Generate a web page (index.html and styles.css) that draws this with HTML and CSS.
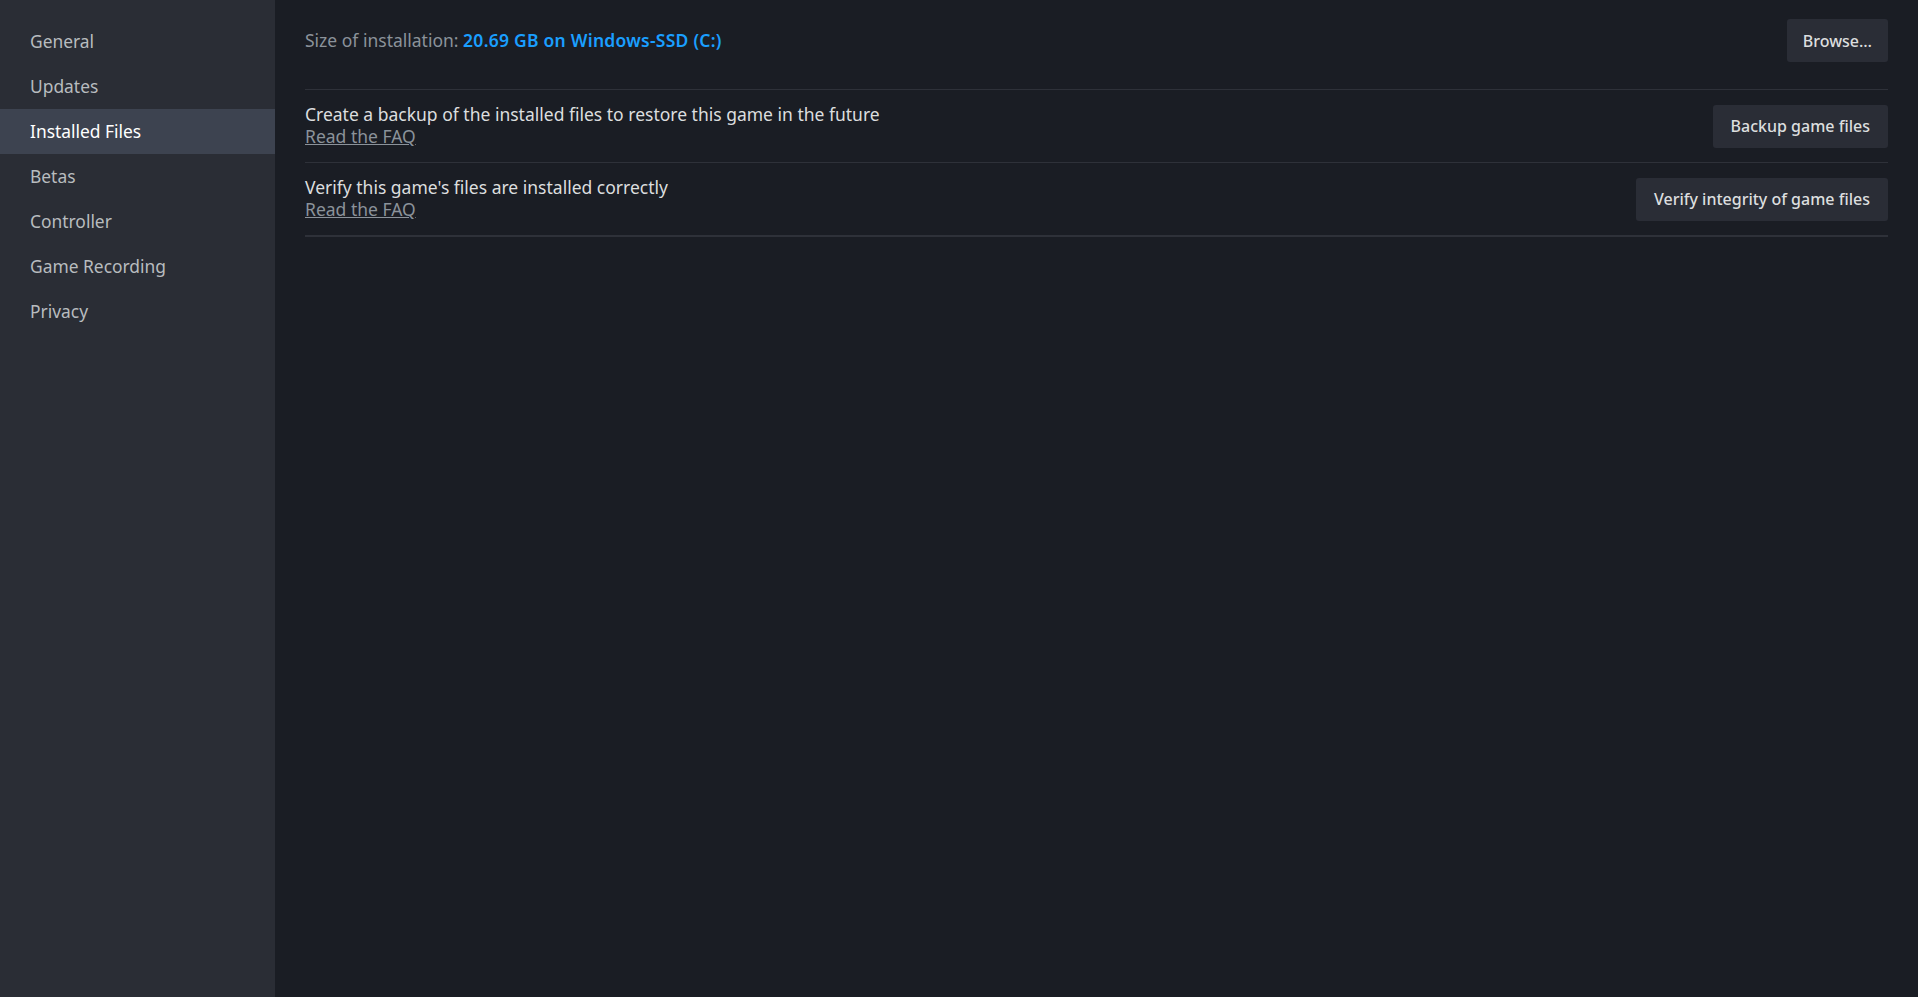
FILE: index.html
```html
<!DOCTYPE html>
<html lang="en">
<head>
<meta charset="utf-8">
<title>Properties - Installed Files</title>
<link rel="stylesheet" href="styles.css">
</head>
<body>
<div class="app">
  <nav class="sidebar">
    <div class="nav-item">General</div>
    <div class="nav-item">Updates</div>
    <div class="nav-item active">Installed Files</div>
    <div class="nav-item">Betas</div>
    <div class="nav-item">Controller</div>
    <div class="nav-item">Game Recording</div>
    <div class="nav-item">Privacy</div>
  </nav>
  <main class="content">
    <div class="row row-size">
      <div class="size">Size of installation: <span class="size-value">20.69 GB on Windows-SSD (C:)</span></div>
      <button class="btn btn-browse">Browse…</button>
    </div>
    <div class="row">
      <div class="desc">
        <div class="desc-title">Create a backup of the installed files to restore this game in the future</div>
        <a class="faq" href="#">Read the FAQ</a>
      </div>
      <button class="btn">Backup game files</button>
    </div>
    <div class="row row-last">
      <div class="desc">
        <div class="desc-title">Verify this game's files are installed correctly</div>
        <a class="faq" href="#">Read the FAQ</a>
      </div>
      <button class="btn">Verify integrity of game files</button>
    </div>
  </main>
</div>
</body>
</html>
```
FILE: styles.css
```css
html, body {
  margin: 0;
  padding: 0;
  height: 100%;
  background: #1a1d24;
}
body {
  font-family: "Noto Sans", "Open Sans", sans-serif;
  font-size: 17.5px;
  color: #dcdedf;
}
.app {
  display: flex;
  height: 100vh;
}
.sidebar {
  width: 275px;
  flex: 0 0 275px;
  background: #2a2d35;
  padding-top: 19px;
  box-sizing: border-box;
}
.nav-item {
  height: 45px;
  line-height: 45px;
  padding-left: 30px;
  color: #b8bcbf;
  font-size: 17.4px;
}
.nav-item.active {
  background: #3d4350;
  color: #ffffff;
}
.content {
  flex: 1;
  padding: 19px 30px 0 30px;
  display: flex;
  flex-direction: column;
}
.row {
  display: flex;
  align-items: center;
  justify-content: space-between;
  border-bottom: 1px solid #2e3139;
  padding: 13px 0 15px 0;
}
.row .btn {
  position: relative;
  top: 1px;
}
.desc {
  display: flex;
  flex-direction: column;
  line-height: 22px;
}
.row-size {
  padding: 0 0 27px 0;
}
.row-size .btn {
  top: 0;
}
.row-size .size {
  padding-bottom: 2px;
}
.row-last {
  border-bottom: 2px solid #2e3139;
}
.size {
  color: #8b929a;
}
.size-value {
  color: #1a9fff;
  font-weight: 600;
  letter-spacing: 0.25px;
}
.desc-title {
  color: #dcdedf;
}
.faq {
  color: #8b929a;
  text-decoration: underline;
  align-self: flex-start;
}
.btn {
  font-family: inherit;
  font-size: 16px;
  font-weight: 500;
  color: #dcdedf;
  background: #2a2d36;
  border: none;
  border-radius: 3px;
  height: 43px;
  padding: 0 18px;
  cursor: pointer;
}
.btn-browse {
  padding: 0 16px;
}
```
